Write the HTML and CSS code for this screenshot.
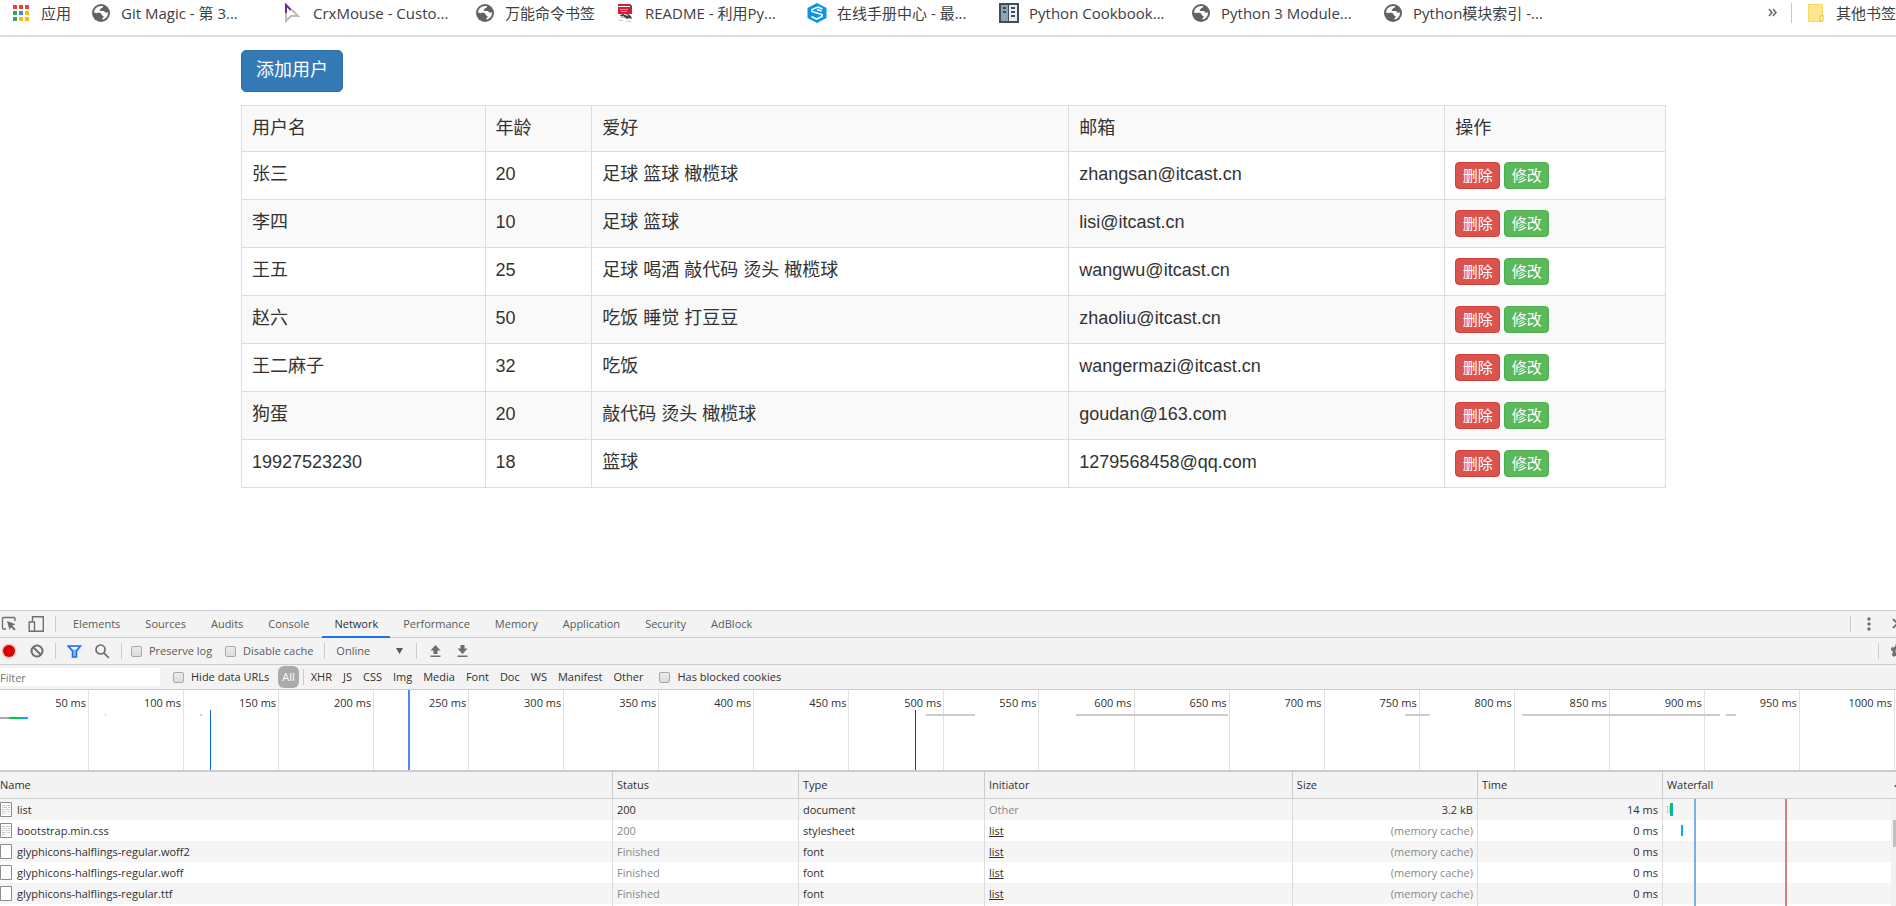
FILE: index.html
```html
<!DOCTYPE html>
<html lang="zh-CN">
<head>
<meta charset="utf-8">
<title>用户列表</title>
<link rel="stylesheet" href="styles.css">
</head>
<body>
<svg class="defs" aria-hidden="true">
  <symbol id="globe" viewBox="0 0 20 20">
    <circle cx="10" cy="10" r="9" fill="#5f6368"/>
    <path fill="#fff" d="M3 9.600c.2-3.300 2.400-5.700 5.300-6.400l3.700-.1c.5 1.100-.4 1.700-1.400 2-.8.200-.6 1.200-1.500 1.500-.9.300-.5 1.300.5 1.300h3c1.200.2 1.200 1.700 2.400 1.800.9 0 1.300-.5 1.900-.3.300 3.300-2 6.200-5 7.200-.9-.2-.6-1.500.2-1.900.9-.5.7-1.900-.4-2-1.300-.1-1.200-1.500-2.400-2.100C7.800 9.800 6.200 11 3 9.600z"/>
    <path fill="#5f6368" d="M5.500 9.700l3.400.1 1.800 1.500-.6 1.400-2.300.1z"/>
  </symbol>
  <symbol id="file" viewBox="0 0 12 15">
    <path d="M.5.5h11v14H.5z" fill="#fff" stroke="#8c8c8c"/>
  </symbol>
  <symbol id="file-text" viewBox="0 0 12 15">
    <path d="M.5.5h11v14H.5z" fill="#fff" stroke="#8c8c8c"/>
    <path d="M2 3.500h3m1 0h4M2 5.500h5m1 0h2M2 7.500h2m1 0h5M2 9.500h4m1 0h3M2 11.500h3m1 0h1" stroke="#ccc"/>
  </symbol>
</svg>

<nav class="bookmarks">
  <a class="bookmark" href="#">
    <svg class="bookmark-icon" viewBox="0 0 20 20"><path fill="#ea4335" d="M2 2h4v4H2zM8 2h4v4H8zM14 2h4v4h-4z"/><path fill="#34a853" d="M2 8h4v4H2zM2 14h4v4H2z"/><path fill="#4285f4" d="M8 8h4v4H8z"/><path fill="#fbbc05" d="M14 8h4v4h-4zM8 14h4v4H8zM14 14h4v4h-4z"/></svg>
    <span>应用</span></a>
  <a class="bookmark bookmark-full" href="#"><svg class="bookmark-icon"><use href="#globe"/></svg><span>Git Magic - 第 3...</span></a>
  <a class="bookmark bookmark-full" href="#">
    <svg class="bookmark-icon" viewBox="0 0 20 20" fill="none"><path d="M3 2v16l5-5h7L9 7" stroke="#bbb" stroke-width="2"/><path d="M3 10V2l5 5" stroke="#6d2f86" stroke-width="2"/></svg>
    <span>CrxMouse - Custo...</span></a>
  <a class="bookmark" href="#"><svg class="bookmark-icon"><use href="#globe"/></svg><span>万能命令书签</span></a>
  <a class="bookmark bookmark-full" href="#">
    <svg class="bookmark-icon" viewBox="0 0 20 20"><path fill="#dc1c3c" d="M3 1h12v2H3zM3 4h14v7H3z"/><path stroke="#f4a0ac" d="M5 6.500h8M6 8.500h6"/><path fill="#444" d="M15 1l2 2v1h-2zM5 12l3-1 2 1 3-1 3 2 1 3-3-1-2 1-3-2-2 1z"/><path fill="#bbb" d="M6 13h3v2H6zM11 12h2v1h-2z"/><path stroke="#ccc" d="M4 17.500h4M11 18.500h5"/></svg>
    <span>README - 利用Py...</span></a>
  <a class="bookmark bookmark-full" href="#">
    <svg class="bookmark-icon" viewBox="0 0 20 20"><path fill="#0b95ea" d="M10 0l9.500 5v10L10 20 .5 15V5z"/><path d="M15.500 6L11 4 5 6.500v2l10 3v2L9.500 16 4.500 13.500M14.500 8L10 6.500" fill="none" stroke="#fff" stroke-width="1.600"/></svg>
    <span>在线手册中心 - 最...</span></a>
  <a class="bookmark bookmark-full" href="#">
    <svg class="bookmark-icon" viewBox="0 0 20 20"><path fill="#3f4c59" d="M0 0h20v20H0z"/><path fill="#90a4b0" d="M2 2h7v16H2z"/><path fill="#eceff1" d="M10 2h8v16h-8z"/><path fill="#3f4c59" d="M4 4h3v2H4zM4 8h3v2H4zM12 4h4v2h-4zM12 8h4v2h-4zM12 12h4v2h-4z"/></svg>
    <span>Python Cookbook...</span></a>
  <a class="bookmark bookmark-full" href="#"><svg class="bookmark-icon"><use href="#globe"/></svg><span>Python 3 Module...</span></a>
  <a class="bookmark bookmark-full" href="#"><svg class="bookmark-icon"><use href="#globe"/></svg><span>Python模块索引 -...</span></a>
  <div class="bookmarks-end">
    <button class="bookmarks-more" aria-label="更多书签"><svg width="9" height="9" viewBox="0 0 9 9" fill="none" stroke="#5f6368" stroke-width="1.500"><path d="M1 1l3 3.500L1 8M5 1l3 3.500L5 8"/></svg></button>
    <span class="bookmarks-sep"></span>
    <a class="bookmark" href="#">
      <svg class="bookmark-icon" viewBox="0 0 20 20"><path d="M2.500 1.500h14v17h-14z" fill="#ffe58f" stroke="#fbd95f"/><path d="M14 18v-5l3-1v6z" fill="#fff0b8" stroke="#f1c232"/></svg>
      <span>其他书签</span></a>
  </div>
</nav>

<main class="page">
  <button class="btn-add">添加用户</button>
  <table class="users">
    <colgroup><col class="u-name"><col class="u-age"><col class="u-hobby"><col class="u-mail"><col class="u-ops"></colgroup>
    <thead><tr><th>用户名</th><th>年龄</th><th>爱好</th><th>邮箱</th><th>操作</th></tr></thead>
    <tbody>
      <tr><td>张三</td><td>20</td><td>足球 篮球 橄榄球</td><td>zhangsan@itcast.cn</td><td><div class="ops"><button class="btn-sm btn-del">删除</button><button class="btn-sm btn-edit">修改</button></div></td></tr>
      <tr><td>李四</td><td>10</td><td>足球 篮球</td><td>lisi@itcast.cn</td><td><div class="ops"><button class="btn-sm btn-del">删除</button><button class="btn-sm btn-edit">修改</button></div></td></tr>
      <tr><td>王五</td><td>25</td><td>足球 喝酒 敲代码 烫头 橄榄球</td><td>wangwu@itcast.cn</td><td><div class="ops"><button class="btn-sm btn-del">删除</button><button class="btn-sm btn-edit">修改</button></div></td></tr>
      <tr><td>赵六</td><td>50</td><td>吃饭 睡觉 打豆豆</td><td>zhaoliu@itcast.cn</td><td><div class="ops"><button class="btn-sm btn-del">删除</button><button class="btn-sm btn-edit">修改</button></div></td></tr>
      <tr><td>王二麻子</td><td>32</td><td>吃饭</td><td>wangermazi@itcast.cn</td><td><div class="ops"><button class="btn-sm btn-del">删除</button><button class="btn-sm btn-edit">修改</button></div></td></tr>
      <tr><td>狗蛋</td><td>20</td><td>敲代码 烫头 橄榄球</td><td>goudan@163.com</td><td><div class="ops"><button class="btn-sm btn-del">删除</button><button class="btn-sm btn-edit">修改</button></div></td></tr>
      <tr><td>19927523230</td><td>18</td><td>篮球</td><td>1279568458@qq.com</td><td><div class="ops"><button class="btn-sm btn-del">删除</button><button class="btn-sm btn-edit">修改</button></div></td></tr>
    </tbody>
  </table>
</main>

<section class="devtools">
  <div class="bar tabs-bar">
    <button class="tool" aria-label="Inspect"><svg viewBox="0 0 16 16"><path d="M14 5V2.500Q14 1.500 13 1.500H2.500Q1.500 1.500 1.500 2.500V12Q1.500 13 2.500 13H5" fill="none" stroke="currentColor" stroke-width="1.300"/><path fill="currentColor" d="M6 5l8.500 3.300-3.200 1.500 3.400 3.400-1.400 1.400-3.400-3.400L8.500 14z"/></svg></button>
    <button class="tool" aria-label="Device toolbar"><svg viewBox="0 0 16 16" fill="none" stroke="currentColor" stroke-width="1.400"><path d="M4.500 5V.7h10.800v14.600H7"/><path d="M1.200 6h5.300v9.300H1.200z"/></svg></button>
    <span class="sep"></span>
    <div class="tabs">
      <button class="tab">Elements</button><button class="tab">Sources</button><button class="tab">Audits</button><button class="tab">Console</button><button class="tab tab-on">Network</button><button class="tab">Performance</button><button class="tab">Memory</button><button class="tab">Application</button><button class="tab">Security</button><button class="tab">AdBlock</button>
    </div>
    <div class="bar-end menu-end">
      <span class="sep"></span>
      <button class="tool" aria-label="Menu"><svg viewBox="0 0 16 16" fill="currentColor"><circle cx="8" cy="3" r="1.700"/><circle cx="8" cy="8" r="1.700"/><circle cx="8" cy="13" r="1.700"/></svg></button>
      <button class="tool" aria-label="Close"><svg viewBox="0 0 16 16" fill="none" stroke="currentColor" stroke-width="1.800"><path d="M6 3l9 9M15 3l-9 9"/></svg></button>
    </div>
  </div>

  <div class="bar">
    <button class="tool" aria-label="Record"><svg viewBox="0 0 16 16"><circle cx="8" cy="8" r="7.500" fill="#f5c4c4"/><circle cx="8" cy="8" r="6" fill="#d80000"/></svg></button>
    <button class="tool" aria-label="Clear"><svg viewBox="0 0 16 16" fill="none" stroke="currentColor" stroke-width="2"><circle cx="9" cy="8" r="5.500"/><path d="M5 4l8 8"/></svg></button>
    <span class="sep"></span>
    <button class="tool" aria-label="Filter"><svg viewBox="0 0 16 16"><path d="M1 3h12.500L9.500 8v6h-4V8z" fill="#8fb4f5" stroke="#1a73e8" stroke-width="1.600"/><path d="M3.500 4h8L9 6.500H6z" fill="#f3f3f3"/></svg></button>
    <button class="tool" aria-label="Search"><svg viewBox="0 0 16 16" fill="none" stroke="currentColor" stroke-width="1.700"><circle cx="6.500" cy="6.500" r="4.500"/><path d="M9.800 9.800l5 5"/></svg></button>
    <span class="sep"></span>
    <label class="check"><input type="checkbox">Preserve log</label>
    <label class="check"><input type="checkbox">Disable cache</label>
    <span class="sep"></span>
    <div class="throttle"><select aria-label="Throttling"><option>Online</option></select><svg width="7" height="6" viewBox="0 0 7 6"><path d="M0 0h7L3.500 6z" fill="#5a5a5a"/></svg></div>
    <span class="sep"></span>
    <button class="tool" aria-label="Import"><svg viewBox="0 0 16 16" fill="currentColor"><path d="M7.500 2l5 5.500h-3V11h-4V7.500h-3zM2.500 12.500h10V14h-10z"/></svg></button>
    <button class="tool" aria-label="Export"><svg viewBox="0 0 16 16" fill="currentColor"><path d="M7.500 11l5-5.500h-3V2h-4v3.500h-3zM2.500 12.500h10V14h-10z"/></svg></button>
    <div class="bar-end">
      <span class="sep"></span>
      <button class="tool" aria-label="Settings"><svg viewBox="0 0 16 16" fill="none" stroke="currentColor"><circle cx="8" cy="8" r="4" stroke-width="3"/><circle cx="8" cy="8" r="6" stroke-width="2.500" stroke-dasharray="3.140 3.140"/></svg></button>
    </div>
  </div>

  <div class="bar filter-bar">
    <input class="filter" type="text" placeholder="Filter" aria-label="Filter">
    <label class="check"><input type="checkbox">Hide data URLs</label>
    <button class="kind kind-on">All</button>
    <span class="sep"></span>
    <div class="kinds">
      <button class="kind">XHR</button><button class="kind">JS</button><button class="kind">CSS</button><button class="kind">Img</button><button class="kind">Media</button><button class="kind">Font</button><button class="kind">Doc</button><button class="kind">WS</button><button class="kind">Manifest</button><button class="kind">Other</button>
    </div>
    <label class="check"><input type="checkbox">Has blocked cookies</label>
  </div>

  <div class="timeline">
    <span class="tick tick-first">50 ms</span><span class="tick">100 ms</span><span class="tick">150 ms</span><span class="tick">200 ms</span><span class="tick">250 ms</span><span class="tick">300 ms</span><span class="tick">350 ms</span><span class="tick">400 ms</span><span class="tick">450 ms</span><span class="tick">500 ms</span><span class="tick">550 ms</span><span class="tick">600 ms</span><span class="tick">650 ms</span><span class="tick">700 ms</span><span class="tick">750 ms</span><span class="tick">800 ms</span><span class="tick">850 ms</span><span class="tick">900 ms</span><span class="tick">950 ms</span><span class="tick">1000 ms</span>
    <i class="span first-load" style="left:0;width:1.48%"></i>
    <i class="span" style="left:5.54%;width:.06%"></i>
    <i class="span" style="left:10.55%;width:.1%"></i>
    <i class="span" style="left:48.84%;width:2.58%"></i>
    <i class="span" style="left:56.75%;width:8.02%"></i>
    <i class="span" style="left:74.1%;width:1.32%"></i>
    <i class="span" style="left:80.28%;width:10.44%"></i>
    <i class="span" style="left:91.03%;width:.53%"></i>
    <i class="event dom-ready" style="left:11.08%"></i>
    <i class="event selected" style="left:21.52%"></i>
    <i class="event loaded" style="left:48.26%"></i>
  </div>

  <div class="requests-wrap">
    <table class="requests">
      <colgroup><col class="r-name"><col class="r-mid"><col class="r-mid"><col class="r-init"><col class="r-num"><col class="r-num"><col></colgroup>
      <thead><tr><th>Name</th><th>Status</th><th>Type</th><th>Initiator</th><th>Size</th><th>Time</th><th><div class="sorted">Waterfall<svg width="6" height="4" viewBox="0 0 6 4"><path d="M0 4l3-4 3 4z" fill="#5a5a5a"/></svg></div></th></tr></thead>
      <tbody>
        <tr><td><div class="file"><svg><use href="#file-text"/></svg>list</div></td><td>200</td><td>document</td><td class="dim">Other</td><td class="num">3.2 kB</td><td class="num">14 ms</td><td><div class="fall"><i class="wait"></i><i class="ttfb"></i><i class="recv"></i></div></td></tr>
        <tr><td><div class="file"><svg><use href="#file-text"/></svg>bootstrap.min.css</div></td><td class="dim">200</td><td>stylesheet</td><td><a href="#">list</a></td><td class="num dim">(memory cache)</td><td class="num">0 ms</td><td><div class="fall fall-late"><i class="recv recv-short"></i></div></td></tr>
        <tr><td><div class="file"><svg><use href="#file"/></svg>glyphicons-halflings-regular.woff2</div></td><td class="dim">Finished</td><td>font</td><td><a href="#">list</a></td><td class="num dim">(memory cache)</td><td class="num">0 ms</td><td></td></tr>
        <tr><td><div class="file"><svg><use href="#file"/></svg>glyphicons-halflings-regular.woff</div></td><td class="dim">Finished</td><td>font</td><td><a href="#">list</a></td><td class="num dim">(memory cache)</td><td class="num">0 ms</td><td></td></tr>
        <tr><td><div class="file"><svg><use href="#file"/></svg>glyphicons-halflings-regular.ttf</div></td><td class="dim">Finished</td><td>font</td><td><a href="#">list</a></td><td class="num dim">(memory cache)</td><td class="num">0 ms</td><td></td></tr>
        <tr class="filler"><td></td><td></td><td></td><td></td><td></td><td></td><td></td></tr>
      </tbody>
    </table>
    <i class="fall-line fall-dom" style="left:89.35%"></i>
    <i class="fall-line fall-load" style="left:94.15%"></i>
    <div class="scrollbar"><div class="thumb"></div></div>
  </div>
</section>
</body>
</html>
```

FILE: styles.css
```css
* { box-sizing: border-box; }

body {
  margin: 0;
  height: 100vh;
  display: flex;
  flex-direction: column;
  overflow: hidden;
  background: #fff;
  color: #333;
  font-family: "Liberation Sans", "Noto Sans CJK SC", sans-serif;
}

button, input, select { font: inherit; color: inherit; margin: 0; }
button { border: 0; padding: 0; background: none; cursor: pointer; }
svg { display: block; flex: none; }
.defs { position: absolute; width: 0; height: 0; }

/* Bookmarks bar */
.bookmarks {
  flex: none;
  display: flex;
  align-items: center;
  gap: 20px;
  height: 37px;
  padding: 0 0 10px 11px;
  border-bottom: 2px solid #dadce0;
  font-family: "Open Sans", "Noto Sans CJK SC", sans-serif;
  font-size: 15px;
  line-height: 20px;
  white-space: nowrap;
}
.bookmark {
  display: flex;
  align-items: center;
  gap: 10px;
  color: #3c4043;
  text-decoration: none;
}
.bookmark-full { width: 172px; }
.bookmark-icon { width: 20px; height: 20px; }
.bookmarks-end {
  display: flex;
  align-items: center;
  gap: 14px;
  margin-left: auto;
}
.bookmarks-sep { width: 1px; height: 20px; background: #c8c8c8; }

/* User list */
.page {
  flex: 1;
  min-height: 0;
  padding: 13px 230px 0 241px;
  font-size: 18px;
  line-height: 25px;
}
.btn-add {
  display: block;
  height: 42px;
  margin-bottom: 13px;
  padding: 0 14px 2px;
  border: 1px solid #2e6da4;
  border-radius: 5px;
  background: #337ab7;
  color: #fff;
}
.users {
  width: 100%;
  table-layout: fixed;
  border-collapse: collapse;
}
.users th, .users td {
  padding: 10px;
  border: 1px solid #ddd;
  font-weight: normal;
  text-align: left;
  vertical-align: top;
}
.users th { background: #f9f9f9; }
.users tbody tr:nth-child(even) { background: #f9f9f9; }
.u-name { width: 17.1%; }
.u-age { width: 7.5%; }
.u-hobby { width: 33.5%; }
.u-mail { width: 26.4%; }
.u-ops { width: 15.5%; }
.ops { display: flex; gap: 4px; }
.btn-sm {
  width: 45px;
  height: 27px;
  border: 1px solid;
  border-radius: 4px;
  color: #fff;
  font-size: 15px;
  line-height: 22px;
}
.btn-del { background: #d9534f; border-color: #d43f3a; }
.btn-edit { background: #5cb85c; border-color: #4cae4c; }

/* Developer tools */
.devtools {
  flex: none;
  border-top: 1px solid #ccc;
  background: #f3f3f3;
  color: #303030;
  font-family: "Open Sans", sans-serif;
  font-size: 11px;
  line-height: 16px;
  white-space: nowrap;
}
.bar {
  display: flex;
  align-items: center;
  gap: 11px;
  height: 27px;
  padding-left: 1px;
  border-bottom: 1px solid #ccc;
  color: #5a5a5a;
  overflow: hidden;
}
.tool { flex: none; color: #6e6e6e; }
.tool svg { width: 16px; height: 16px; }
.sep { flex: none; width: 1px; height: 16px; background: #ccc; }
.bar-end { display: flex; align-items: center; gap: 11px; margin: 0 -10px 0 auto; }
.menu-end { gap: 10px; margin-right: -7px; }

.tabs-bar { overflow: clip; overflow-clip-margin: 1px; }
.tabs { display: flex; gap: 1px; align-self: stretch; margin: 0 0 -1px -6px; }
.tab { padding: 0 12px; border-bottom: 2px solid transparent; }
.tab-on { color: #303030; border-color: #1a73e8; }

.check { display: flex; align-items: center; gap: 7px; }
.sep + .check { margin-left: -2px; }
.check + .check { margin-left: 2px; }
.check input {
  appearance: none;
  width: 11px;
  height: 11px;
  border: 1px solid #a9a9a9;
  border-radius: 2px;
  background: linear-gradient(#ececec, #dcdcdc);
}
.throttle { display: flex; align-items: center; }
.throttle select {
  appearance: none;
  width: 60px;
  padding: 0;
  border: 0;
  background: none;
}
.throttle svg { margin-right: 2px; }

.filter-bar { height: 25px; padding-left: 0; color: #303030; }
.filter {
  width: 160px;
  height: 18px;
  padding: 0;
  border: 0;
  background: #fff;
}
.filter::placeholder { color: #757575; }
.filter-bar .check { margin-left: 2px; }
.filter-bar .check:last-child { margin-left: 5px; }
.kind-on {
  height: 22px;
  margin: 0 -7px 0 -2px;
  padding: 0 4px;
  border-radius: 6px;
  background: #aaa;
  color: #fff;
}
.kinds { display: flex; gap: 11px; margin-left: -4px; }

/* Overview timeline */
.timeline {
  position: relative;
  display: flex;
  height: 80px;
  padding-right: 1px;
  background: #fff;
}
.tick {
  flex: 1;
  padding: 5px 2px 0 0;
  border-right: 1px solid #e1e1e1;
  text-align: right;
}
.tick-first { flex: none; width: 89px; }
.span, .event { position: absolute; }
.span { top: 24px; height: 2px; background: #ccc; }
.first-load {
  top: 27px;
  background: linear-gradient(90deg, #aaa 32%, #00c853 32% 78%, #03a9f4 78%);
}
.event { top: 20px; bottom: 0; width: 1px; }
.dom-ready { background: #0867cb; }
.loaded { background: #a11616; }
.selected { top: 0; width: 2px; background: #4f87f7; }

/* Request table */
.requests-wrap { position: relative; border-top: 2px solid #ccc; }
.requests {
  width: 100%;
  table-layout: fixed;
  border-collapse: separate;
  border-spacing: 0;
}
.r-name { width: 32.33%; }
.r-mid { width: 9.81%; }
.r-init { width: 16.24%; }
.r-num { width: 9.76%; }
.requests th, .requests td {
  height: 21px;
  padding: 0 4px;
  border-right: 1px solid #dcdcdc;
  text-align: left;
}
.requests th {
  height: 27px;
  border-right-color: #ccc;
  border-bottom: 1px solid #ccc;
  font-weight: normal;
}
.requests th:first-child, .requests td:first-child { padding-left: 0; }
.requests th:last-child, .requests td:last-child { border-right: 0; padding-right: 0; }
.requests tbody tr { background: #fff; }
.requests tbody tr:nth-child(odd) { background: #f5f5f5; }
.requests .filler td { height: 2px; padding: 0; line-height: 0; }
.requests .num { text-align: right; }
.requests .dim { color: #888; }
.requests a { color: inherit; }
.sorted { display: flex; align-items: center; justify-content: space-between; margin-right: -4px; }
.file { display: flex; align-items: center; gap: 5px; }
.file svg { width: 12px; height: 15px; }
.fall { display: flex; align-items: center; height: 13px; }
.fall-late { padding-left: 14px; }
.wait { width: 3px; height: 7px; border: 1px solid #ccc; }
.ttfb { width: 1px; height: 13px; background: #00c853; }
.recv { width: 2px; height: 13px; background: #03a9f4; }
.recv-short { height: 11px; }
.fall-line { position: absolute; top: 27px; bottom: 0; width: 2px; }
.fall-dom { background: #7eaee2; }
.fall-load { background: #d88080; }
.scrollbar {
  position: absolute;
  top: 27px;
  right: 0;
  bottom: 0;
  width: 5px;
  padding: 21px 0 0 2px;
  background: #f1f1f1;
}
.thumb { height: 27px; background: #c1c1c1; }
```
